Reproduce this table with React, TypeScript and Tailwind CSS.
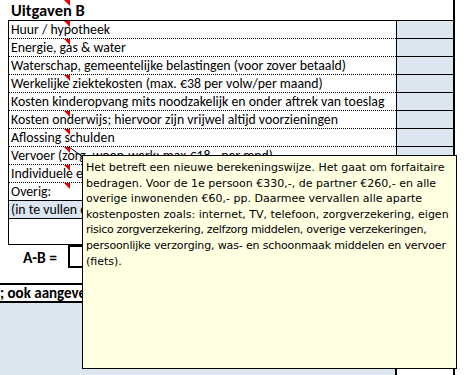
import React from "react";

const rows: { t: string; mark: boolean; solid?: boolean; blue?: boolean }[] = [
  { t: "Huur / hypotheek", mark: true },
  { t: "Energie, gas & water", mark: true },
  { t: "Waterschap, gemeentelijke belastingen (voor zover betaald)", mark: false },
  { t: "Werkelijke ziektekosten (max. €38 per volw/per maand)", mark: true },
  { t: "Kosten kinderopvang mits noodzakelijk en onder aftrek van toeslag", mark: false },
  { t: "Kosten onderwijs; hiervoor zijn vrijwel altijd voorzieningen", mark: true },
  { t: "Aflossing schulden", mark: true },
  { t: "Vervoer  (zorg, woon-werk; max €18,- per mnd)", mark: true },
  { t: "Individuele en overige kosten", mark: true },
  { t: "Overig:", mark: true, solid: true },
  { t: "(in te vullen door aanvrager)", mark: false, solid: true, blue: true },
];

function Mark() {
  return (
    <svg className="absolute left-[55px] top-0" width="6" height="6" viewBox="0 0 6 6">
      <polygon points="0,0 6,0 6,6" fill="#e00000" />
    </svg>
  );
}

export default function App() {
  const calibri = { fontFamily: "Carlito, Lato, 'Liberation Sans', sans-serif" };
  return (
    <div className="relative w-[468px] h-[375px] overflow-hidden bg-white text-black" style={calibri}>
      <div className="flex h-full">
        <div className="w-[455px] border-r-2 border-black flex flex-col">
          {/* title */}
          <div className="relative h-[20px] pl-[11px] text-[16.5px] font-bold leading-[20px]">
            Uitgaven B
            <svg className="absolute left-[64px] top-0" width="6" height="6" viewBox="0 0 6 6">
              <polygon points="0,0 6,0 6,6" fill="#e00000" />
            </svg>
          </div>
          {/* table */}
          <div className="ml-[8px] border-l border-t border-black">
            {rows.map((r, i) => (
              <div key={i} className={`flex h-[18px] ${r.blue ? "bg-[#dce6f1]" : ""}`}>
                <div
                  className={`relative w-[387px] border-b border-black pl-[2px] text-[13.8px] leading-[17px] whitespace-nowrap ${
                    r.solid ? "border-solid" : "border-dotted"
                  }`}
                >
                  {r.t}
                  {r.mark && <Mark />}
                </div>
                <div className="flex-1 border-l border-b border-black bg-[#dce6f1]" />
              </div>
            ))}
            <div className="h-[26px] border-b border-black" />
          </div>
          {/* A-B */}
          <div className="flex h-[38px] items-start">
            <div className="w-[68px] pl-[23px] pt-[3px] text-[15.5px] font-bold leading-[20px]">A-B =</div>
            <div className="w-[120px] h-[23px] border-l-2 border-t-2 border-b-2 border-black" />
          </div>
          <div className="h-[20px] border-t-2 border-b-2 border-black text-[15px] font-bold leading-[16px] whitespace-nowrap overflow-hidden">
            ; ook aangeven welke kosten
          </div>
          <div className="flex flex-1">
            <div className="w-[397px] bg-[#dce6f1] border-r-2 border-black" />
            <div className="flex-1 bg-white" />
          </div>
        </div>
        <div className="flex-1 bg-white" />
      </div>

      {/* leader line */}
      <svg className="absolute left-0 top-0" width="100" height="170">
        <line x1="69" y1="147" x2="83" y2="157" stroke="#000" strokeWidth="1" />
      </svg>

      {/* comment tooltip */}
      <div
        className="absolute left-[82px] top-[155px] w-[375px] h-[214px] border border-black bg-[#ffffe1] pl-[3px] pt-[4px] text-[11px] leading-[15.6px] text-black"
        style={{ fontFamily: "'DejaVu Sans', Verdana, sans-serif" }}
      >
        <div className="whitespace-nowrap">Het betreft een nieuwe berekeningswijze. Het gaat om forfaitaire</div>
        <div className="whitespace-nowrap">bedragen. Voor de 1e persoon €330,-, de partner €260,- en alle</div>
        <div className="whitespace-nowrap">overige inwonenden €60,- pp. Daarmee vervallen alle aparte</div>
        <div className="whitespace-nowrap">kostenposten zoals: internet, TV, telefoon, zorgverzekering, eigen</div>
        <div className="whitespace-nowrap tracking-[-0.3px]">risico zorgverzekering, zelfzorg middelen, overige verzekeringen,</div>
        <div className="whitespace-nowrap tracking-[-0.15px]">persoonlijke verzorging, was- en schoonmaak middelen en vervoer</div>
        <div className="whitespace-nowrap">(fiets).</div>
      </div>
    </div>
  );
}
